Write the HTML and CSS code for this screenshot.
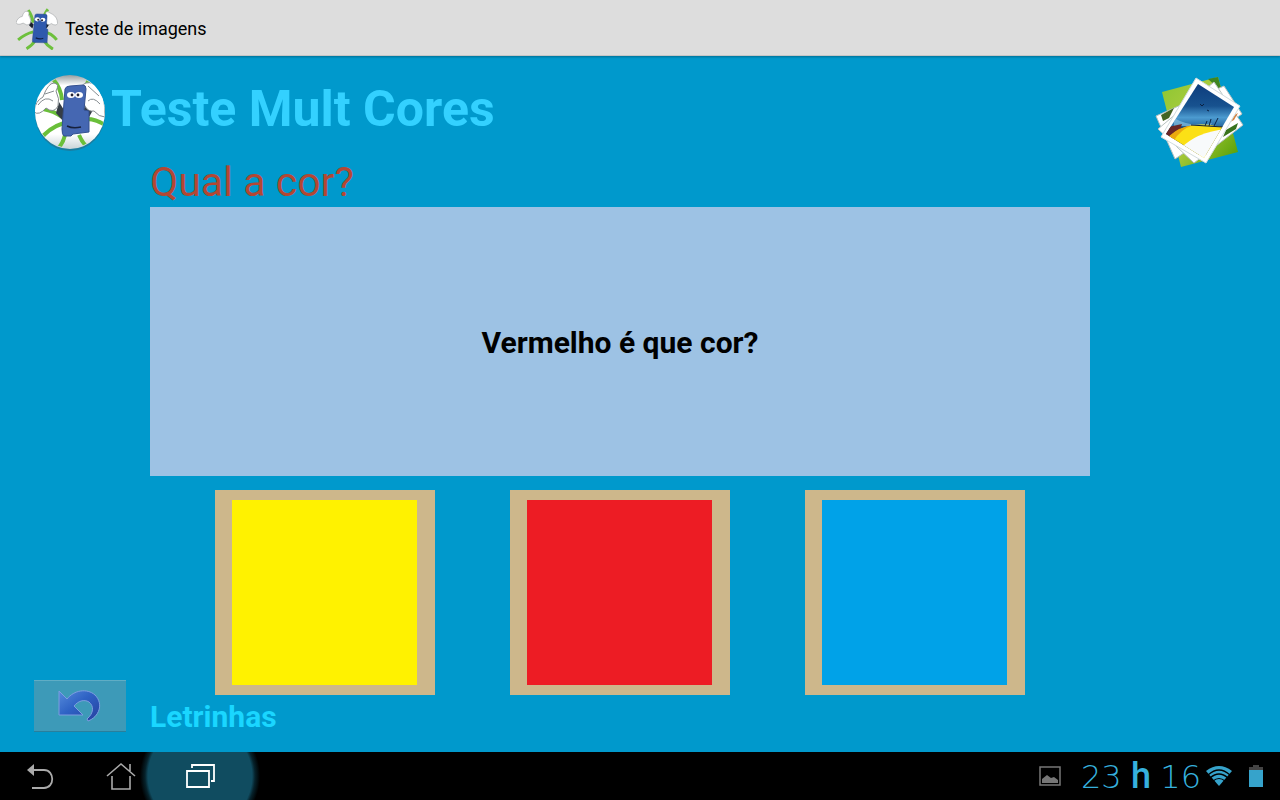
FILE: index.html
```html
<!DOCTYPE html>
<html lang="pt">
<head>
<meta charset="utf-8">
<meta name="viewport" content="width=device-width, initial-scale=1">
<title>Teste de imagens</title>
<link rel="stylesheet" href="styles.css">
</head>
<body>
<header class="action-bar">
  <svg class="app-icon" viewBox="0 0 100 100" aria-hidden="true">
    <g fill="none" stroke="#6dc03c" stroke-width="7">
      <path d="M41 35Q38 17 29 5M63 35Q65 17 76 3M41 57Q23 61 5 76M67 57Q84 59 97 76M46 77Q39 89 25 97M66 77Q75 91 88 98"/>
    </g>
    <path fill="#18202c" d="M32 30l10 9-3 10-8-8zM66 46l5-14 9 6-7 10z"/>
    <path fill="#fff" stroke="#a2a6a8" stroke-width="1.5" d="M0 35Q4 22 15 20Q18 7 26 8Q33 8 30 17Q38 30 33 38Q27 44 17 36Q5 42 0 35zM69 34Q65 25 71 20Q69 7 76 9L87 15Q99 22 99 37Q95 44 84 37Q77 44 69 34z"/>
    <path fill="#2f59ad" stroke="#244686" d="M45 18Q45 14 50 14L71 15Q75 16 74 21L72 49 76 51 74 83 43 82Q38 82 39 77z"/>
    <ellipse cx="51" cy="27" rx="6" ry="5" fill="#fff"/><ellipse cx="64" cy="28" rx="6" ry="5" fill="#fff"/>
    <circle cx="53" cy="28" r="2.5" fill="#223"/><circle cx="62" cy="29" r="2.5" fill="#223"/>
    <path fill="none" stroke="#142044" stroke-width="3" d="M47 71Q56 75 65 72"/>
  </svg>
  <span class="action-title">Teste de imagens</span>
</header>

<main class="stage">
  <div class="brand">
    <svg class="logo" viewBox="0 0 72 78" aria-hidden="true">
      <defs>
        <clipPath id="disc"><ellipse cx="36" cy="38" rx="35" ry="36"/></clipPath>
        <linearGradient id="rim" x2="0" y2="1"><stop stop-color="#959da0"/><stop offset=".14" stop-color="#fff"/><stop offset=".8" stop-color="#fff"/><stop offset="1" stop-color="#c9d4d8"/></linearGradient>
      </defs>
      <ellipse cx="36" cy="40" rx="35" ry="37" fill="#286f88" opacity=".65"/>
      <ellipse cx="36" cy="38" rx="35" ry="37" fill="url(#rim)"/>
      <g clip-path="url(#disc)">
        <g fill="none" stroke="#6abf3a" stroke-width="4"><path d="M28 26Q27 14 19 5M48 22L55 5M28 43Q20 37 9 35M30 49Q14 54 5 67M53 45Q63 45 72 52M31 61Q29 70 22 77M45 61Q50 73 60 78"/></g>
        <path fill="#353d46" d="M25 28l5 8-1 11-7-8zM49 39l3-12 7 9-5 9z"/>
        <path fill="#fff" stroke="#858c90" d="M0 38Q1 27 9 23Q14 9 20 9Q26 10 22 17Q26 25 24 32Q20 40 12 34Q5 42 0 38zM51 32Q46 24 51 19Q45 11 52 9Q59 7 66 16Q71 22 71 43Q65 43 60 37Q54 38 51 32z"/>
        <path fill="none" stroke="#858c90" d="M4 31Q11 21 19 27M54 27Q59 22 66 30M11 20L20 17M54 12L65 22"/>
        <path fill="#4567b2" stroke="#34508f" d="M31 15Q32 12 36 12L49 11Q52 11 52 15L50 36 55 37 55 58 39 60 37 62 30 62Q28 61 28 55z"/>
        <ellipse cx="37" cy="21" rx="4" ry="3" fill="#fff"/><ellipse cx="45" cy="21" rx="4" ry="3" fill="#fff"/>
        <circle cx="38" cy="21" r="1.4" fill="#223"/><circle cx="44" cy="21" r="1.4" fill="#223"/>
        <path d="M33 52Q39 55 47 53" fill="none" stroke="#17213c" stroke-width="1.5"/>
      </g>
    </svg>
    <h1 class="title">Teste Mult Cores</h1>
  </div>

  <svg class="photos" viewBox="0 0 110 110" aria-hidden="true">
    <defs>
      <linearGradient id="sky" x2="0" y2="1"><stop stop-color="#0d3c7c"/><stop offset=".32" stop-color="#17528f"/><stop offset=".48" stop-color="#4c9bd0"/><stop offset=".59" stop-color="#2a6fa6"/><stop offset=".64" stop-color="#0b2548"/></linearGradient>
      <linearGradient id="leaf" x2="1" y2="1"><stop stop-color="#8cc532"/><stop offset=".5" stop-color="#b1cf40"/><stop offset="1" stop-color="#4b9900"/></linearGradient>
      <clipPath id="print"><path d="M52 18L88 41 58 92 20 68z"/></clipPath>
    </defs>
    <path fill="url(#leaf)" d="M16 26L72 11 92 86 35 101z"/>
    <path fill="#3f8520" d="M62 13l10-2 4 15-5-5z"/>
    <g fill="#fff" stroke="#b6c1bf"><path d="M10 50L78 20 96 48 29 93z"/><path d="M12 63L68 16 97 59 48 97z"/></g>
    <path fill="#426324" d="M15 49l13-7-5 10-6 3z"/><path fill="#d7823e" d="M85 51l7-4-4 7-8 4z"/><path fill="#38721d" d="M80 64l12-7-2 6-13 8z"/>
    <path fill="#fff" stroke="#d1dcdf" d="M50 12L94 40 60 97 15 71z"/>
    <g clip-path="url(#print)">
      <path fill="url(#sky)" d="M18 17h72v72H18z"/>
      <path fill="#9dd0ea" opacity=".55" d="M28 52Q45 62 66 57L64 60H28z"/>
      <path fill="#6a2726" d="M18 62L36 58 31 73 20 72z"/>
      <path fill="#fbe016" d="M24 70Q42 52 80 62L65 94 18 82z"/>
      <path fill="#eba90d" d="M22 71Q34 60 48 59Q34 63 27 76z"/>
      <path fill="#f8fafb" d="M34 83Q50 66 80 63L65 97 34 86z"/>
      <path fill="none" stroke="#0b2140" d="M45 59L77 61M59 60L61 55M63 60L65 53M68 60L72 52M54 38l2 2 2-2M61 44l2 1"/>
    </g>
  </svg>

  <h2 class="question">Qual a cor?</h2>
  <section class="prompt">Vermelho é que cor?</section>

  <div class="answers">
    <button class="answer" type="button" aria-label="Amarelo"><span class="swatch yellow"></span></button>
    <button class="answer" type="button" aria-label="Vermelho"><span class="swatch red"></span></button>
    <button class="answer" type="button" aria-label="Azul"><span class="swatch blue"></span></button>
  </div>

  <button class="undo" type="button" aria-label="Voltar">
    <svg width="44" height="34" viewBox="0 0 44 34" aria-hidden="true">
      <defs><linearGradient id="undo-fill" x2="1" y2="1"><stop stop-color="#568bdb"/><stop offset=".45" stop-color="#2e62c4"/><stop offset="1" stop-color="#263f9d"/></linearGradient></defs>
      <path fill="url(#undo-fill)" stroke="#7d9de0" d="M1 2L9 10C16 1 29-1 37 6C46 15 41 28 30 32L29 30C36 24 36 17 31 13C26 10 20 12 16 17L25 26 1 26z"/>
    </svg>
  </button>
  <p class="product">Letrinhas</p>
</main>

<footer class="system-bar">
  <nav class="nav-keys" aria-label="Sistema">
    <button class="key" type="button" aria-label="Anterior">
      <svg width="32" height="30" viewBox="0 0 32 30"><path d="M8 9H20C31 9 31 27 20 27H8" fill="none" stroke="#aaa" stroke-width="1.8"/><path d="M3 9L10 3V15z" fill="#aaa"/></svg>
    </button>
    <button class="key" type="button" aria-label="Início">
      <svg width="32" height="30" viewBox="0 0 32 30"><path d="M3 15L17 3 31 15M26 10V3M8 15V28H26V15" fill="none" stroke="#aaa" stroke-width="1.6"/></svg>
    </button>
    <button class="key recent" type="button" aria-label="Recentes">
      <svg width="32" height="30" viewBox="0 0 32 30"><path d="M3 10H25V26H3zM8 7V4H30V20H27" fill="none" stroke="#fff" stroke-width="1.8"/></svg>
    </button>
  </nav>
  <div class="status">
    <svg class="screenshot" width="22" height="20" viewBox="0 0 22 20" aria-hidden="true"><path d="M1 1H21V19H1z" fill="none" stroke="#777" stroke-width="1.5"/><path d="M3 17V13L8 9 12 12 15 11 19 14V17z" fill="#777"/></svg>
    <time class="clock" datetime="23:16"><span>23</span><b>h</b><span>16</span></time>
    <svg class="wifi" width="28" height="22" viewBox="0 0 28 22" aria-hidden="true"><path d="M14 21L1 6Q14-4 27 6z" fill="#36a3cb"/><path d="M3 10Q14 0 25 10M5 13Q14 5 23 13M8 16Q14 11 20 16" fill="none" stroke="#000" stroke-width="1.2"/></svg>
    <svg width="14" height="22" viewBox="0 0 14 22" aria-hidden="true"><path d="M4 0H10V2H14V5H0V2H4z" fill="#444"/><path d="M0 5H14V22H0z" fill="#36a3cb"/></svg>
  </div>
</footer>
</body>
</html>
```
FILE: styles.css
```css
* {
  box-sizing: border-box;
}

body {
  display: flex;
  flex-direction: column;
  min-height: 100vh;
  margin: 0;
  background: #0099cc;
  font-family: Roboto, "Noto Sans", sans-serif;
}

button {
  padding: 0;
  border: 0;
  font: inherit;
  cursor: pointer;
}

svg {
  display: block;
  flex: none;
}

.action-bar {
  display: flex;
  align-items: center;
  gap: 7px;
  height: 56px;
  padding: 2px 0 0 16px;
  background: #ddd;
  border-bottom: 1px solid #c5c5c5;
  box-shadow: 0 1px 2px #006f94;
}

.app-icon {
  width: 42px;
  height: 42px;
}

.action-title {
  font-size: 18px;
}

.stage {
  display: grid;
  flex: 1;
  grid-template-columns: 150px 1fr 190px;
  grid-template-rows: 100px 51px 1fr 219px 57px;
}

.brand {
  display: flex;
  grid-area: 1 / 1 / 2 / 3;
  align-items: center;
  gap: 5px;
  padding: 14px 0 0 34px;
}

.logo {
  width: 72px;
  height: 78px;
}

.title {
  margin: 0 0 8px;
  color: #33d1ff;
  font-size: 50px;
  line-height: 58px;
}

.photos {
  grid-area: 1 / 3 / 3 / 4;
  justify-self: end;
  width: 110px;
  height: 110px;
  margin: 10px 24px 0 0;
}

.question {
  grid-area: 2 / 2;
  margin: 0;
  padding-top: 2px;
  color: #b34733;
  font-size: 41px;
  font-weight: 400;
  line-height: 48px;
}

.prompt {
  display: flex;
  grid-area: 3 / 2;
  align-items: center;
  justify-content: center;
  padding-top: 2px;
  background: #9dc2e4;
  color: #000;
  font-size: 30px;
  font-weight: 700;
}

.answers {
  display: flex;
  grid-area: 4 / 2;
  align-items: flex-end;
  justify-content: center;
  gap: 75px;
}

.answer {
  display: flex;
  align-items: center;
  width: 220px;
  height: 205px;
  padding: 0 18px 0 17px;
  background: #cdb78b;
}

.swatch {
  flex: 1;
  height: 185px;
}

.yellow {
  background: #fff200;
}

.red {
  background: #ed1c24;
}

.blue {
  background: #00a2e8;
}

.undo {
  display: flex;
  grid-area: 4 / 1 / 6 / 2;
  align-items: center;
  align-self: end;
  justify-content: center;
  width: 92px;
  height: 52px;
  margin: 0 0 20px 34px;
  background: #3d9ab8;
  border-top: 1px solid #60adc5;
  border-bottom: 1px solid #287f9c;
}

.product {
  grid-area: 5 / 2;
  margin: 0;
  padding-top: 4px;
  color: #1ad6ff;
  font-size: 30px;
  font-weight: 700;
  line-height: 36px;
}

.system-bar {
  display: flex;
  align-items: center;
  justify-content: space-between;
  height: 48px;
  background: #000;
}

.nav-keys {
  display: flex;
}

.key {
  display: flex;
  align-items: center;
  justify-content: center;
  width: 80px;
  height: 48px;
  background: transparent;
}

.recent {
  width: 120px;
  margin-left: -20px;
  background: radial-gradient(circle at center, #104c60 52px, #06222b 55px, transparent 60px);
}

.status {
  display: flex;
  align-items: center;
  padding-right: 17px;
}

.screenshot {
  margin-right: 20px;
}

.clock {
  display: flex;
  align-items: baseline;
  justify-content: space-between;
  width: 124px;
  padding-right: 4px;
  color: #36b0dd;
  font-family: "DejaVu Sans", sans-serif;
  font-size: 32px;
  font-weight: 200;
  line-height: 40px;
}

.clock b {
  font-family: Roboto, sans-serif;
  font-size: 36px;
  font-weight: 500;
}

.wifi {
  margin-right: 16px;
}
```
